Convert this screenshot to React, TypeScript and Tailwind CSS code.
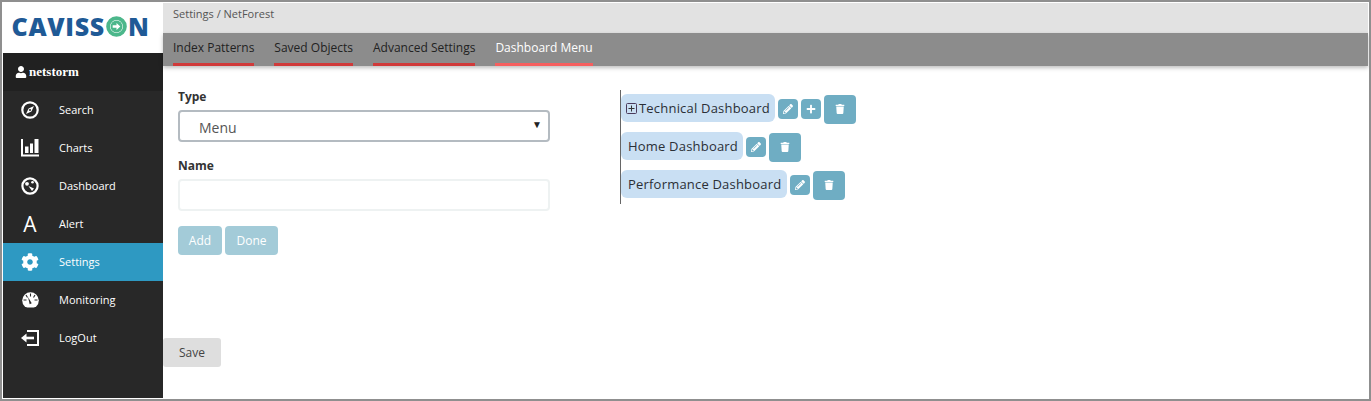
import { FaCog, FaPencilAlt, FaPlus, FaTrash, FaUser } from "react-icons/fa";
import type { ReactNode } from "react";

function CompassIcon() {
  return (
    <svg width="18" height="18" viewBox="0 0 18 18" fill="none">
      <circle cx="9" cy="9" r="7.7" stroke="white" strokeWidth="2.2" />
      <path d="M13 5L10.4 10.4 5 13l2.6-5.4z" fill="white" />
      <circle cx="9" cy="9" r="1" fill="#282828" />
    </svg>
  );
}

function ChartsIcon() {
  return (
    <svg width="18" height="18" viewBox="0 0 18 18" fill="none">
      <path d="M1 0v16.5h17" stroke="white" strokeWidth="2" />
      <rect x="4" y="7.5" width="3.5" height="6.5" fill="white" />
      <rect x="9" y="4.5" width="3" height="9.5" fill="white" />
      <rect x="13.5" y="0" width="4" height="14" fill="white" />
    </svg>
  );
}

function DashboardIcon() {
  return (
    <svg width="18" height="18" viewBox="0 0 18 18" fill="none">
      <circle cx="9" cy="9" r="7.6" stroke="white" strokeWidth="2.2" />
      <circle cx="6" cy="6.8" r="1.9" fill="white" />
      <circle cx="11.5" cy="5.3" r="1.3" fill="white" />
      <path d="M7.5 9l5.5 2.5-2 2.5z" fill="white" />
    </svg>
  );
}

function GaugeIcon() {
  return (
    <svg width="17" height="17" viewBox="0 0 17 17" fill="none">
      <circle cx="8.5" cy="8.5" r="8.3" fill="white" />
      <path d="M8.5 1.5v3M4 3l1.5 2.5M13 3l-1.5 2.5M1.5 8h3M12.5 8h3" stroke="#282828" strokeWidth="1.1" />
      <path d="M6 5l3.7 6.3-2 1z" fill="#282828" />
      <path d="M3.5 15.5h10l1 1.5h-12z" fill="#282828" />
    </svg>
  );
}

function LogoutIcon() {
  return (
    <svg width="18" height="16" viewBox="0 0 18 16" fill="none">
      <path d="M6 1h11v14H6" stroke="white" strokeWidth="2" />
      <path d="M13 8H4" stroke="white" strokeWidth="2.6" />
      <path d="M5.5 3.5v9L0 8z" fill="white" />
    </svg>
  );
}

function LogoO() {
  return (
    <svg className="mx-[1px]" width="21" height="21" viewBox="0 0 22 22">
      <circle cx="11" cy="11" r="8.8" fill="white" stroke="#4cb78b" strokeWidth="4" />
      <circle cx="11" cy="11" r="6.2" fill="#4cb78b" />
      <path d="M7 9.8h4V7.3l4 3.7-4 3.7v-2.5H7z" fill="white" />
    </svg>
  );
}

const menu: { label: string; icon: ReactNode; active?: boolean }[] = [
  { label: "Search", icon: <CompassIcon /> },
  { label: "Charts", icon: <ChartsIcon /> },
  { label: "Dashboard", icon: <DashboardIcon /> },
  { label: "Alert", icon: <span className="text-[21px] leading-none font-normal">A</span> },
  { label: "Settings", icon: <FaCog size={18} />, active: true },
  { label: "Monitoring", icon: <GaugeIcon /> },
  { label: "LogOut", icon: <LogoutIcon /> },
];

function SmallButton({ children }: { children: ReactNode }) {
  return (
    <button className="flex h-5 w-5 items-center justify-center rounded-[4px] bg-[#6fadc3] text-[10px] text-white">
      {children}
    </button>
  );
}

function TreeRow({ label, width, plus, expandable }: { label: string; width: string; plus?: boolean; expandable?: boolean }) {
  return (
    <div className="flex h-[38px] items-center">
      <div className={`mb-[2px] flex h-7 items-center rounded-[6px] bg-[#c9dff3] pt-px text-[13px] font-medium tracking-[0.2px] text-[#2b2f36] ${width} ${expandable ? "pl-[5px]" : "pl-[7px]"}`}>
        {expandable && (
          <svg className="mr-[2px] mb-px" width="11" height="11" viewBox="0 0 11 11" fill="none">
            <rect x="0.5" y="0.5" width="10" height="10" rx="1" stroke="#4a3a5c" />
            <path d="M5.5 2.5v6M2.5 5.5h6" stroke="#333" />
          </svg>
        )}
        {label}
      </div>
      <div className="ml-[3px] flex items-center gap-[3px]">
        <SmallButton>
          <FaPencilAlt />
        </SmallButton>
        {plus && (
          <SmallButton>
            <FaPlus />
          </SmallButton>
        )}
        <button className="flex h-[29px] w-[32px] items-center justify-center rounded-[4px] bg-[#6fadc3] text-[10px] text-white">
          <FaTrash />
        </button>
      </div>
    </div>
  );
}

export default function App() {
  return (
    <div className="box-border flex h-[401px] w-[1371px] overflow-hidden border-2 border-[#8f8f8f] bg-white p-px font-['Open_Sans',sans-serif] text-[#333]">
      <aside className="flex w-[160px] shrink-0 flex-col bg-[#282828]">
        <div className="flex h-[50px] items-center justify-center bg-white pr-[5px] pb-[3px] font-['Open_Sans',sans-serif] text-[25px] leading-none font-extrabold tracking-[0.7px] text-[#1f5a96]">
          CAVISS
          <LogoO />
          N
        </div>
        <div className="flex h-[38px] items-center gap-[2px] bg-[#212121] pl-3 font-['Liberation_Serif',serif] text-[13px] font-bold text-white">
          <FaUser size={12} />
          netstorm
        </div>
        {menu.map((item) => (
          <div
            key={item.label}
            className={`flex h-[38px] items-center text-[11px] text-white ${item.active ? "bg-[#2e99c2]" : ""}`}
          >
            <span className="flex w-[56px] shrink-0 items-center justify-center pr-[2px]">{item.icon}</span>
            {item.label}
          </div>
        ))}
      </aside>

      <main className="flex min-w-0 flex-1 flex-col">
        <div className="h-[30px] bg-[#e2e2e2] pl-[10px] text-[11px] leading-[22px] text-[#555]">Settings / NetForest</div>
        <nav className="relative flex h-[33px] gap-5 bg-[#8c8c8c] pl-[10px] text-[12px] text-[#222] shadow-[0_2px_4px_rgba(0,0,0,0.25)]">
          <span className="flex h-full items-center border-b-[3px] border-[#d03a3a]">Index Patterns</span>
          <span className="flex h-full items-center border-b-[3px] border-[#d03a3a]">Saved Objects</span>
          <span className="flex h-full items-center border-b-[3px] border-[#d03a3a]">Advanced Settings</span>
          <span className="flex h-full items-center border-b-[3px] border-[#f65f5f] text-white">Dashboard Menu</span>
        </nav>

        <div className="flex h-[272px] items-start pl-[15px]">
          <form className="w-[372px] pt-[22px]">
            <label className="block h-[22px] text-[12px] leading-[17px] font-bold text-[#333]">Type</label>
            <div className="relative flex h-8 items-center rounded-[4px] border-2 border-[#b4bbc1] pt-[2px] pl-[19px] text-[14px] text-[#555]">
              Menu
              <span className="absolute top-[5px] right-[6px] text-[10px] text-[#222]">▼</span>
            </div>
            <label className="mt-[16px] block h-[21px] text-[12px] leading-[15px] font-bold text-[#333]">Name</label>
            <input className="block h-8 w-full rounded-[4px] border-2 border-[#eef2f2] bg-white" />
            <div className="mt-[15px] flex gap-[3px]">
              <button type="button" className="h-[29px] w-[44px] rounded-[4px] bg-[#a3cbd8] text-[12px] font-medium text-white">Add</button>
              <button type="button" className="h-[29px] w-[53px] rounded-[4px] bg-[#a3cbd8] text-[12px] font-medium text-white">Done</button>
            </div>
          </form>
          <div className="mt-[24px] ml-[70px] border-l border-[#666]">
            <TreeRow label="Technical Dashboard" width="w-[154px]" plus expandable />
            <TreeRow label="Home Dashboard" width="w-[122px]" />
            <TreeRow label="Performance Dashboard" width="w-[166px]" />
          </div>
        </div>

        <button className="h-[29px] w-[58px] rounded-[3px] bg-[#dedede] text-[12px] text-[#444]">Save</button>
      </main>
    </div>
  );
}
